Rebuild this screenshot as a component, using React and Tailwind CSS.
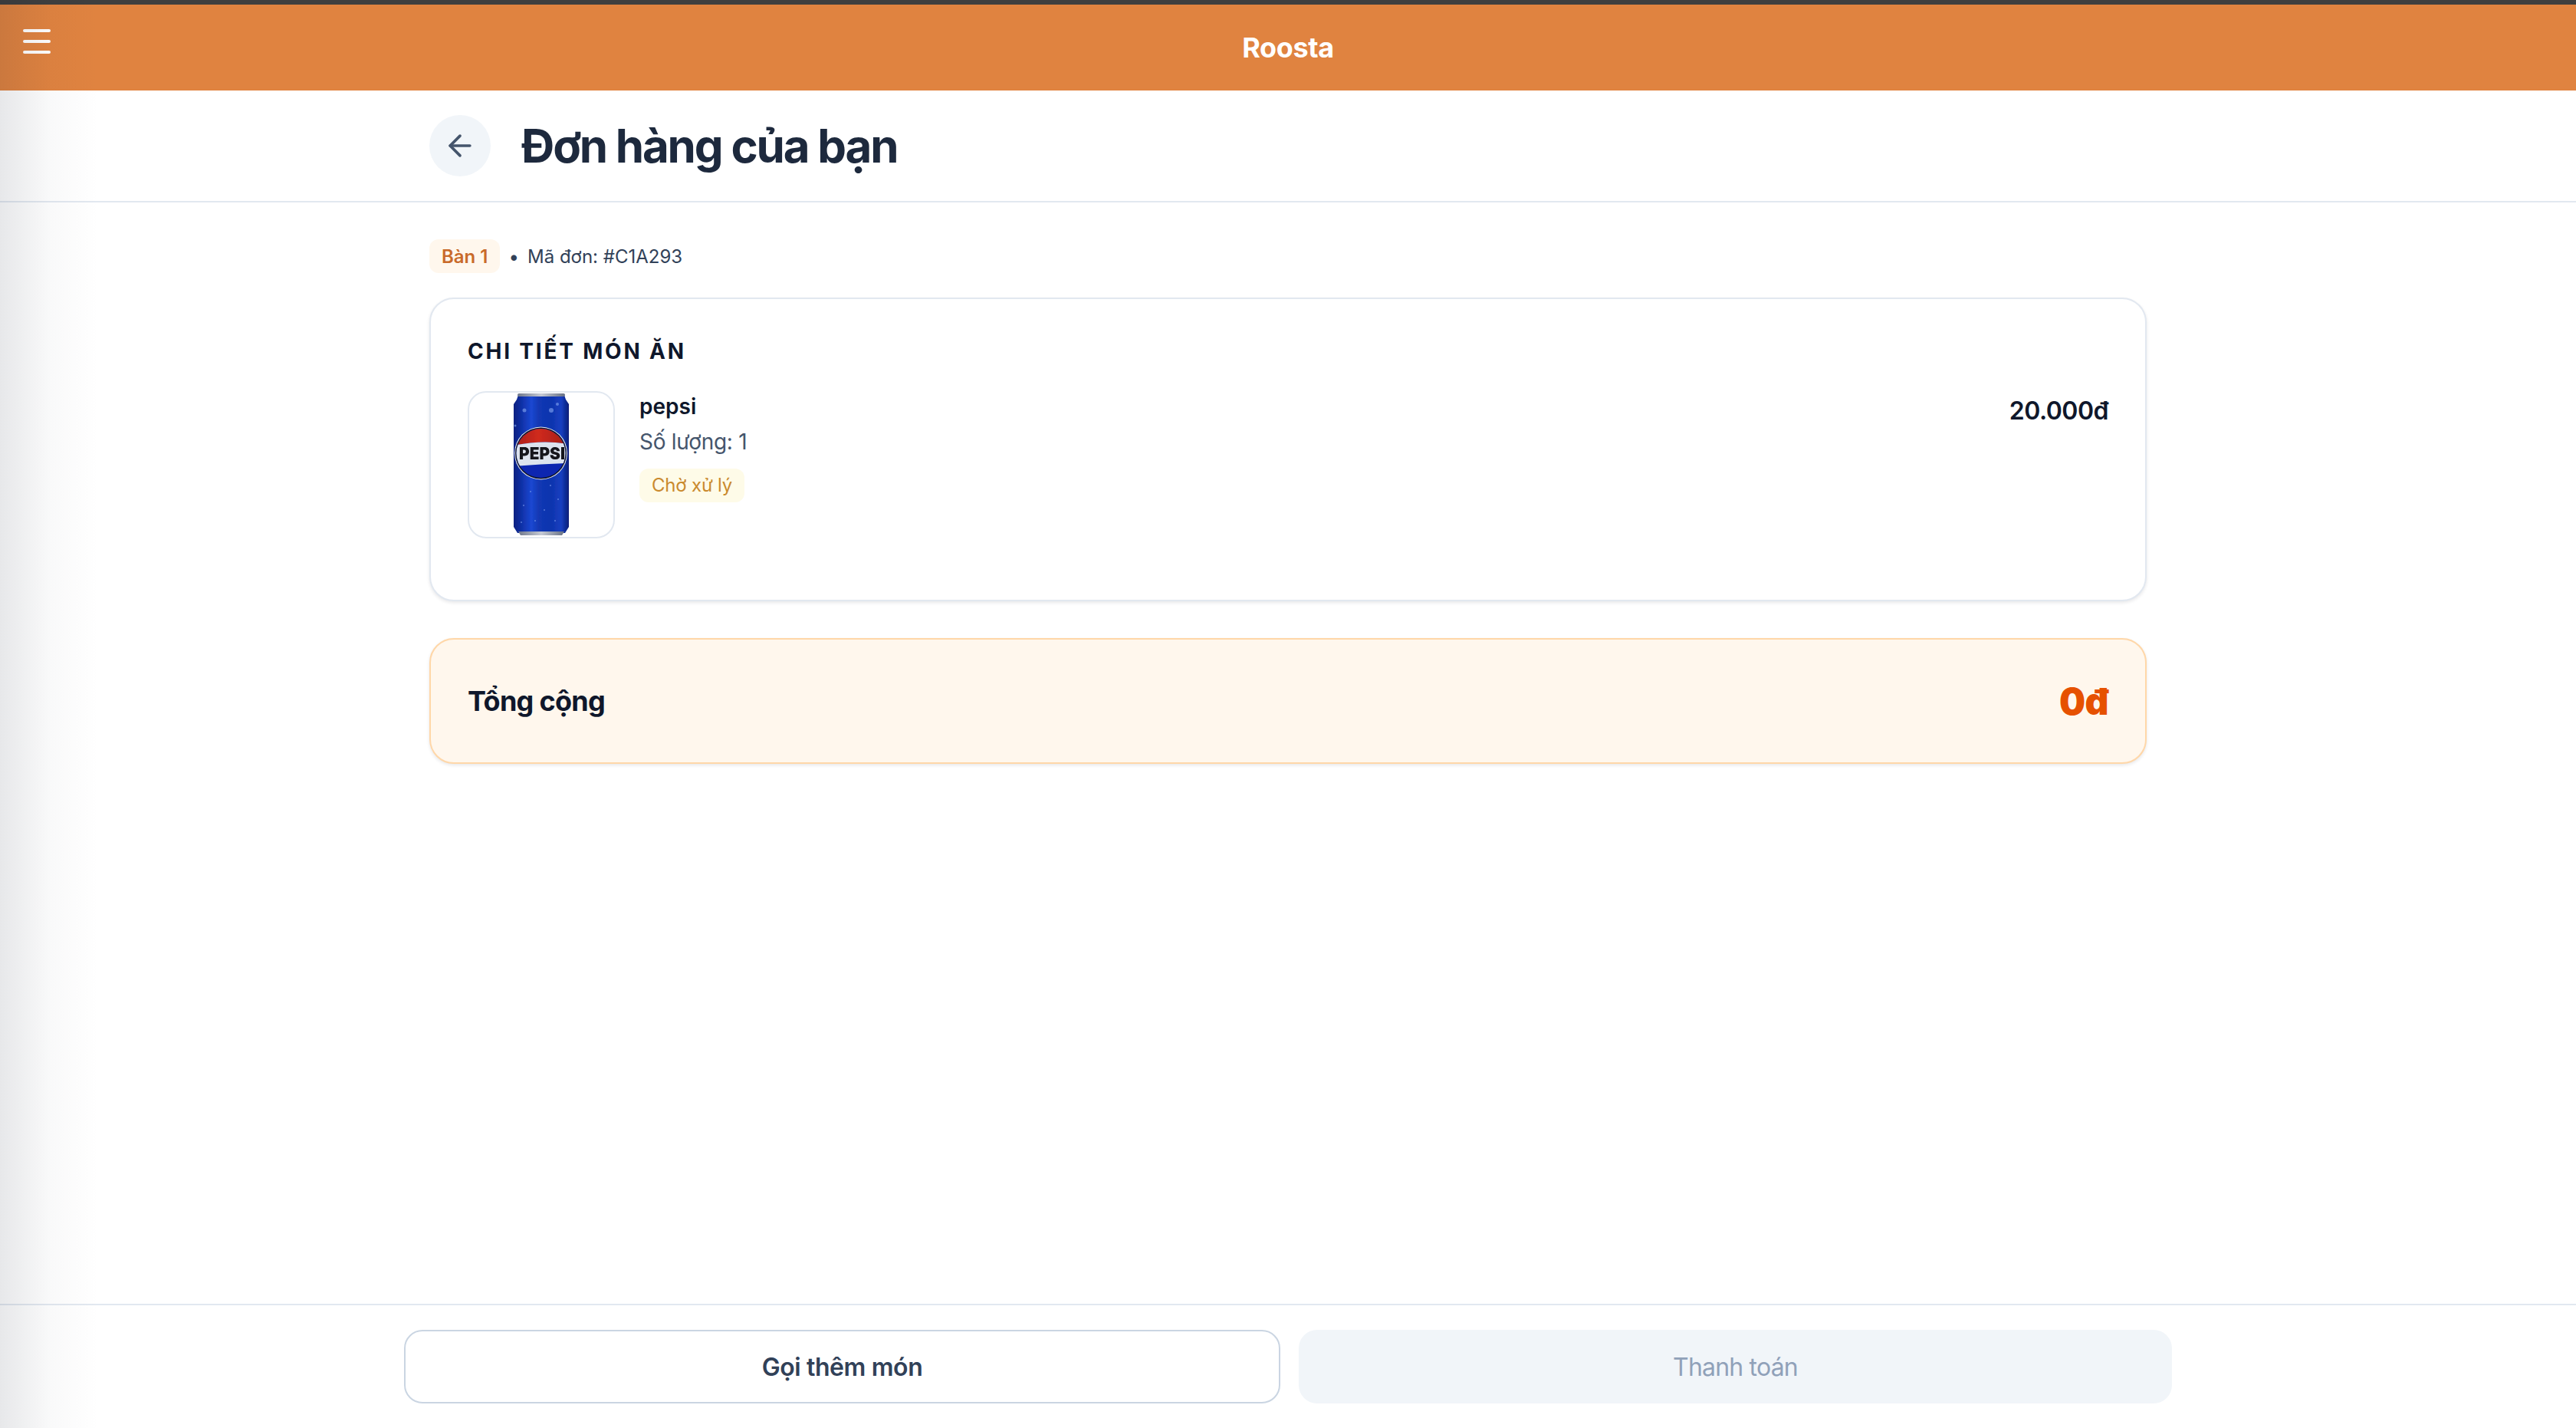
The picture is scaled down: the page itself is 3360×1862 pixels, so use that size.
import React from "react";
import { ArrowLeft } from "lucide-react";

function PepsiCan() {
    return (
        <svg width="72" height="186" viewBox="0 0 72 186">
            <defs>
                <linearGradient id="canBody" x1="0" x2="1" y1="0" y2="0">
                    <stop offset="0" stopColor="#0a2180" />
                    <stop offset="0.14" stopColor="#0f2fa6" />
                    <stop offset="0.32" stopColor="#1b48d2" />
                    <stop offset="0.45" stopColor="#1238b4" />
                    <stop offset="0.68" stopColor="#0f34ae" />
                    <stop offset="0.86" stopColor="#163fc0" />
                    <stop offset="1" stopColor="#081d76" />
                </linearGradient>
                <linearGradient id="canRim" x1="0" x2="1" y1="0" y2="0">
                    <stop offset="0" stopColor="#6f788c" />
                    <stop offset="0.5" stopColor="#c4c9d4" />
                    <stop offset="1" stopColor="#667084" />
                </linearGradient>
                <linearGradient id="logoRed" x1="0" x2="1" y1="0" y2="0">
                    <stop offset="0" stopColor="#a81f18" />
                    <stop offset="0.45" stopColor="#d02a1e" />
                    <stop offset="1" stopColor="#a01c15" />
                </linearGradient>
                <clipPath id="logoClip">
                    <circle cx="35.5" cy="78" r="32" />
                </clipPath>
                <filter id="soft" x="-5%" y="-5%" width="110%" height="110%">
                    <feGaussianBlur stdDeviation="0.45" />
                </filter>
            </defs>
            <g filter="url(#soft)">
                <path d="M6 2h60l2 6 4 6v160l-5 8H5l-5-8V14l4-6z" fill="url(#canBody)" />
                <rect x="5" y="0" width="62" height="4" rx="2" fill="url(#canRim)" />
                <path d="M6 180h60l-3 5H9z" fill="url(#canRim)" />
                <circle cx="35.5" cy="78" r="34.5" fill="#e6e9f0" />
                <circle cx="35.5" cy="78" r="33.5" fill="#10142e" />
                <g clipPath="url(#logoClip)">
                    <rect x="0" y="40" width="72" height="80" fill="#0727b0" />
                    <path d="M0 42h72v24Q36 60 0 68z" fill="url(#logoRed)" />
                    <path d="M0 68Q36 60 72 66v25Q36 92 0 95z" fill="#dde3ee" />
                </g>
                <text x="7" y="86" fontFamily="Inter, sans-serif" fontSize="22" fontWeight="900" fill="#15151b" textLength="60" lengthAdjust="spacingAndGlyphs">
                    PEPSI
                </text>
                <g fill="#7ea0ee" opacity="0.65">
                    <circle cx="14" cy="22" r="2.5" />
                    <circle cx="49" cy="22" r="3" />
                    <circle cx="57" cy="14" r="2" />
                    <circle cx="2" cy="42" r="1.5" />
                    <circle cx="48" cy="120" r="1" />
                    <circle cx="22" cy="128" r="1" />
                    <circle cx="58" cy="138" r="1" />
                    <circle cx="13" cy="146" r="1" />
                    <circle cx="40" cy="152" r="1" />
                    <circle cx="28" cy="166" r="1" />
                    <circle cx="54" cy="166" r="1" />
                    <circle cx="10" cy="168" r="1" />
                </g>
            </g>
        </svg>
    );
}

export default function App() {
    return (
        <div className="relative flex h-screen flex-col overflow-hidden bg-white font-['Inter',sans-serif] antialiased">
            <div className="pointer-events-none absolute inset-y-0 left-0 z-10 w-[130px] bg-gradient-to-r from-slate-900/10 via-slate-900/[0.025] via-50% to-transparent"></div>

            {/* Header */}
            <header className="grid h-[118px] shrink-0 grid-cols-[1fr_auto_1fr] items-center border-t-[6px] border-[#3f3f3f] bg-[#e08340]">
                <div className="flex flex-col gap-[10px] self-start pt-[32px] pl-[30px]">
                    <div className="h-[4px] w-[36px] rounded-full bg-white"></div>
                    <div className="h-[4px] w-[36px] rounded-full bg-white"></div>
                    <div className="h-[4px] w-[36px] rounded-full bg-white"></div>
                </div>
                <h1 className="text-[36px] font-bold tracking-[-0.4px] text-white">Roosta</h1>
                <div></div>
            </header>

            {/* Title bar */}
            <div className="h-[146px] shrink-0 border-b-2 border-slate-200">
                <div className="mx-auto flex h-full w-[2240px] items-center gap-[40px]">
                    <button className="flex h-[80px] w-[80px] items-center justify-center rounded-full bg-slate-100 text-slate-600">
                        <ArrowLeft size={44} />
                    </button>
                    <h2 className="text-[60px] font-bold tracking-[-2.2px] text-slate-800">Đơn hàng của bạn</h2>
                </div>
            </div>

            {/* Order */}
            <main className="mx-auto w-[2240px] flex-1 pt-[48px]">
                <div className="mb-[32px] flex h-[44px] items-center text-[24px]">
                    <span className="flex h-full items-center rounded-[12px] bg-[#fff7ed] px-[16px] pt-[2px] font-semibold text-[#c96a2a]">Bàn 1</span>
                    <span className="mx-[11px] pt-[2px] text-slate-700">•</span>
                    <span className="pt-[2px] text-slate-700">Mã đơn: #C1A293</span>
                </div>

                <section className="mb-[48px] rounded-[32px] border-2 border-slate-200 bg-white px-[48px] pt-[48px] pb-[80px] shadow-[0_2px_4px_rgba(15,23,42,0.1)]">
                    <h3 className="mb-[32px] text-[28px] leading-[40px] font-bold tracking-[0.1em] text-slate-900 uppercase">Chi tiết món ăn</h3>
                    <div className="flex items-start justify-between">
                        <div className="flex gap-[32px]">
                            <div className="flex h-[192px] w-[192px] items-center justify-center rounded-[24px] border-2 border-slate-200">
                                <PepsiCan />
                            </div>
                            <div className="flex flex-col items-start">
                                <div className="text-[28px] leading-[40px] font-semibold text-slate-900">pepsi</div>
                                <div className="mt-[6px] text-[28px] leading-[40px] tracking-[-0.3px] text-slate-600">Số lượng: 1</div>
                                <span className="mt-[15px] flex h-[44px] items-center rounded-[12px] bg-[#fefbe8] px-[16px] text-[24px] tracking-[-0.2px] text-[#ca8a2e]">Chờ xử lý</span>
                            </div>
                        </div>
                        <div className="mt-[2px] text-[32px] leading-[48px] font-semibold tracking-[-0.5px] text-slate-900">20.000đ</div>
                    </div>
                </section>

                <section className="flex h-[164px] items-center justify-between rounded-[32px] border-2 border-orange-200 bg-[#fff7ed] px-[48px] shadow-[0_2px_4px_rgba(15,23,42,0.1)]">
                    <span className="text-[36px] font-bold tracking-[-0.7px] text-slate-900">Tổng cộng</span>
                    <span className="pt-[2px] text-[48px] font-black tracking-[-0.5px] text-[#e65100]">0đ</span>
                </section>
            </main>

            {/* Actions */}
            <footer className="shrink-0 border-t-2 border-slate-200 py-[32px]">
                <div className="mx-auto flex w-[2306px] gap-[24px]">
                    <button className="h-[96px] flex-1 rounded-[24px] border-2 border-slate-300 bg-white pt-[2px] text-[32px] font-semibold tracking-[-0.4px] text-slate-700">Gọi thêm món</button>
                    <button className="h-[96px] flex-1 rounded-[24px] bg-slate-100 pt-[2px] text-[32px] font-normal tracking-[-0.8px] text-slate-400">Thanh toán</button>
                </div>
            </footer>
        </div>
    );
}
